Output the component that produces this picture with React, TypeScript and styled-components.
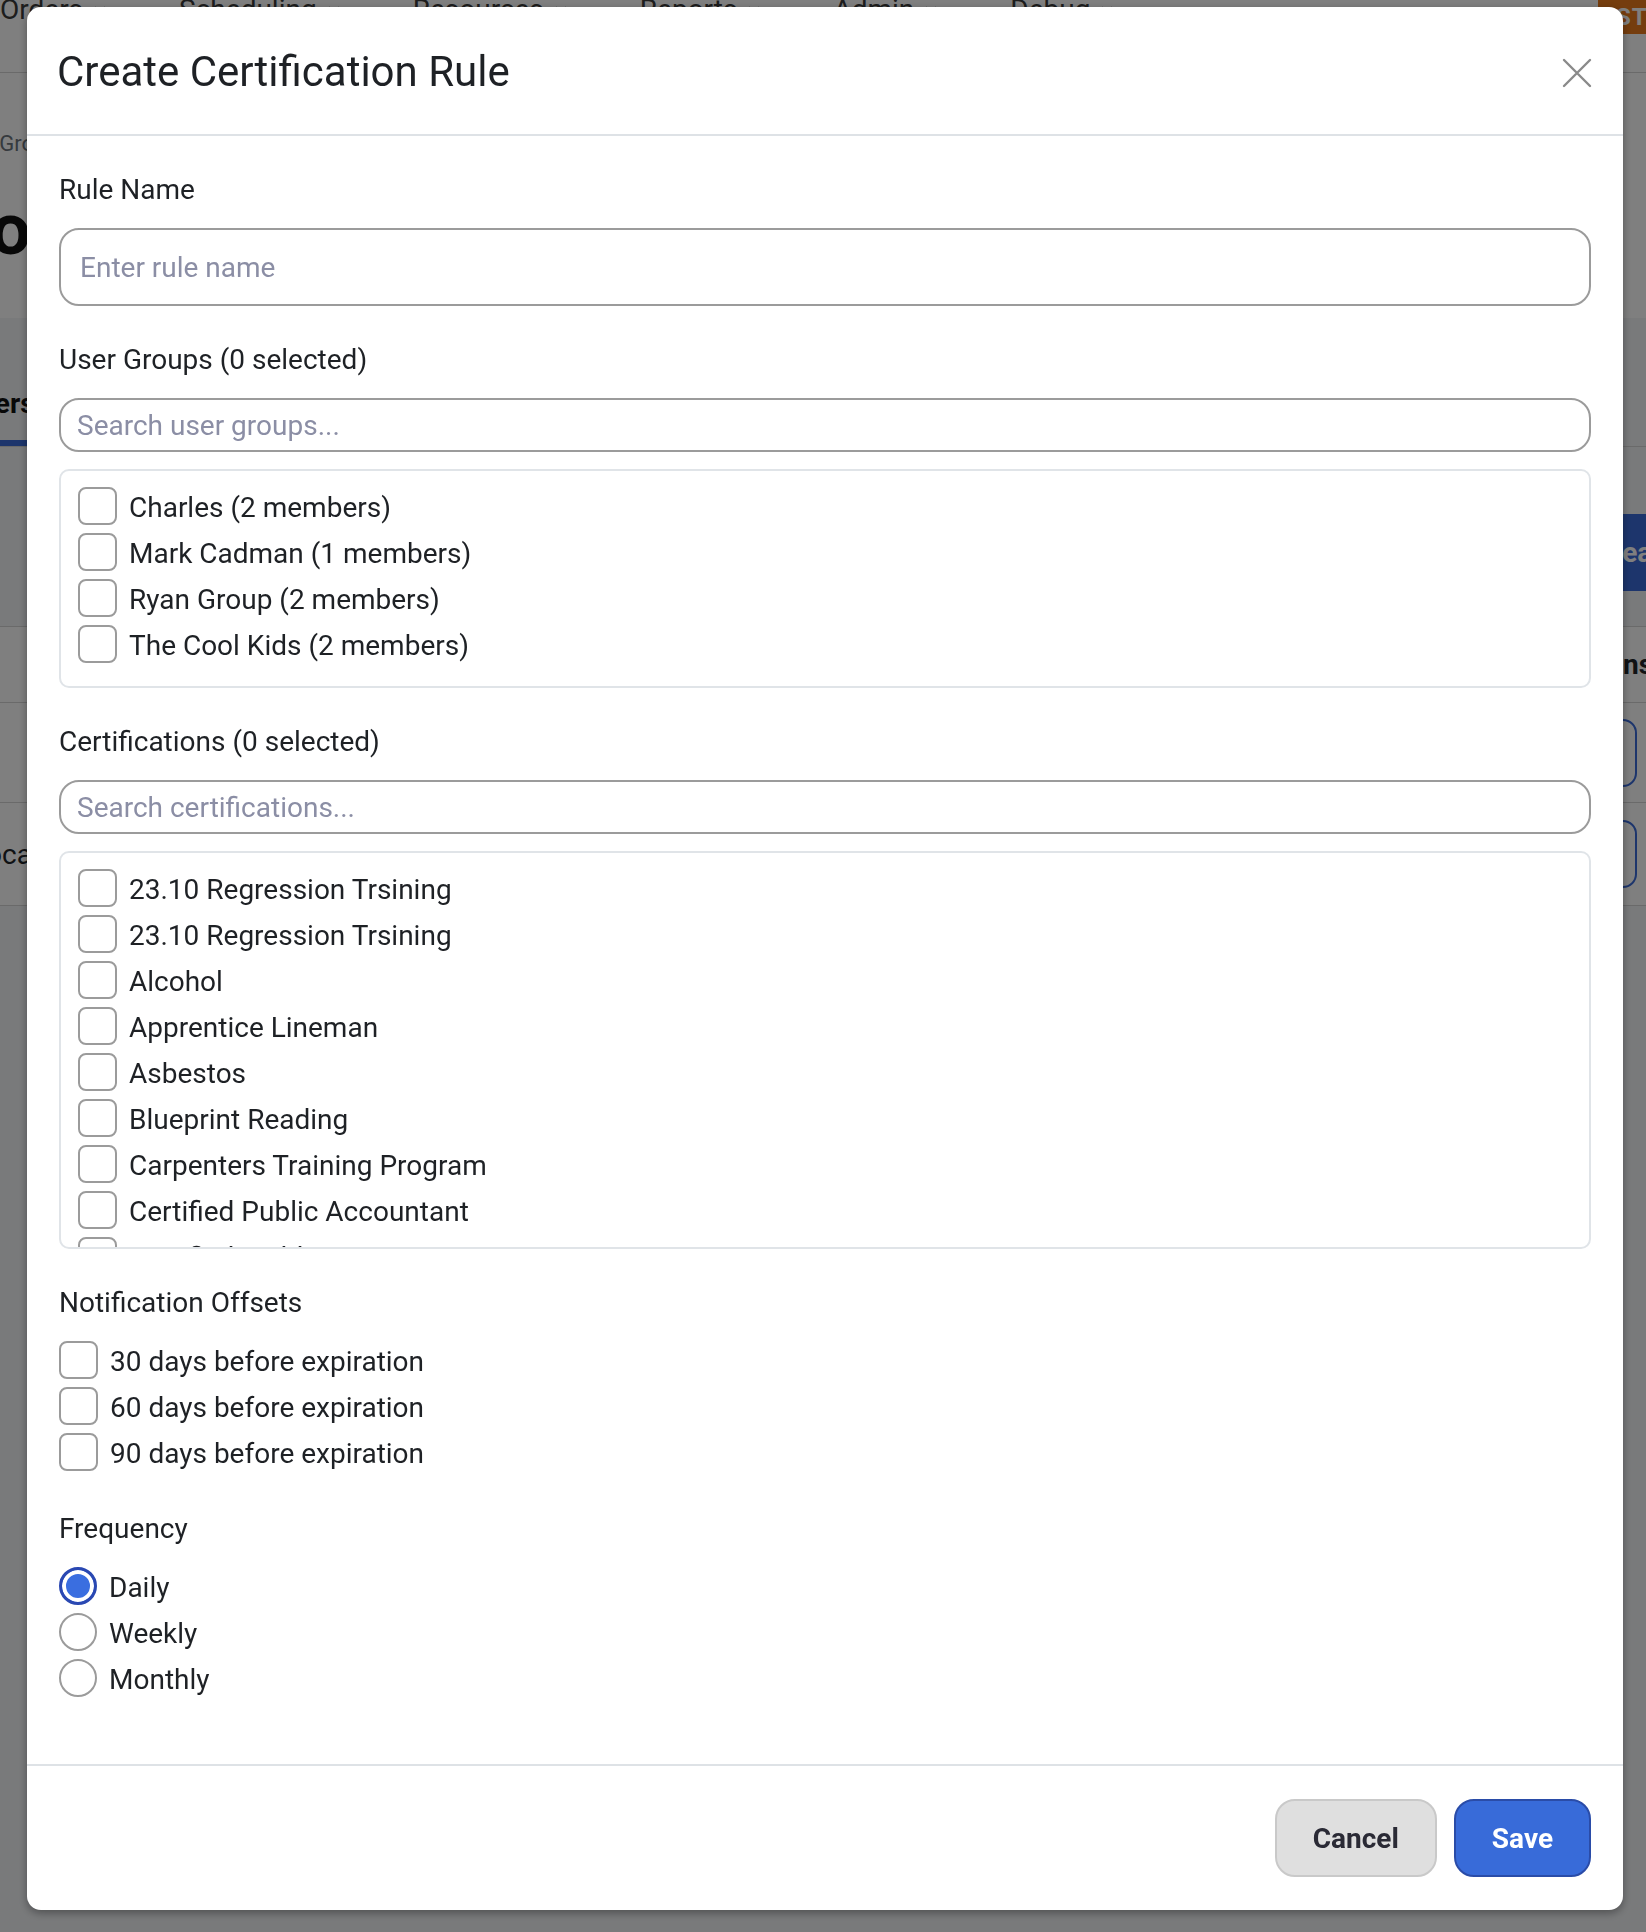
import { useState } from "react";
import styled, { createGlobalStyle } from "styled-components";
import { ChevronDown } from "lucide-react";

const USER_GROUPS = [
  { id: "charles", name: "Charles", members: 2 },
  { id: "mark", name: "Mark Cadman", members: 1 },
  { id: "ryan", name: "Ryan Group", members: 2 },
  { id: "cool", name: "The Cool Kids", members: 2 },
];

const CERTIFICATIONS = [
  "23.10 Regression Trsining",
  "23.10 Regression Trsining",
  "Alcohol",
  "Apprentice Lineman",
  "Asbestos",
  "Blueprint Reading",
  "Carpenters Training Program",
  "Certified Public Accountant",
  "Certified Welding",
  "Confined Space Entry",
  "CPR / First Aid",
  "Crane Operator",
];

const OFFSETS = [30, 60, 90];

const FREQUENCIES = [
  { value: "daily", label: "Daily" },
  { value: "weekly", label: "Weekly" },
  { value: "monthly", label: "Monthly" },
];

const NAV_ITEMS = ["Orders", "Scheduling", "Resources", "Reports", "Admin", "Debug"];

const GlobalStyle = createGlobalStyle`
  * { box-sizing: border-box; }
  html, body {
    margin: 0;
    padding: 0;
  }
  body {
    font-family: Roboto, "Liberation Sans", Arial, sans-serif;
    color: #212529;
    background: #f2f4f7;
    overflow: hidden;
  }
`;

/* ---------- page behind the dialog ---------- */

const Page = styled.div`
  width: 1646px;
  height: 1932px;
  overflow: hidden;
  background: #f2f4f7;
`;

const TopNav = styled.nav`
  position: relative;
  height: 73px;
  display: flex;
  align-items: flex-start;
  gap: 70px;
  background: #fff;
  border-bottom: 1px solid #d4d4d4;
`;

const NavItem = styled.div`
  display: flex;
  align-items: center;
  gap: 8px;
  font-size: 28px;
  line-height: 20px;
  color: #3a3a3a;
`;

const EnvBadge = styled.div`
  position: absolute;
  top: 0;
  right: -96px;
  height: 34px;
  padding: 0 18px;
  background: #ea7a1c;
  color: #fff;
  font-size: 24px;
  font-weight: 700;
  line-height: 34px;
  letter-spacing: 1px;
`;

/* the page is wider than the window and sits scrolled a little to the right */
const Main = styled.main`
  width: 1911px;
  margin-left: -117px;
`;

const PageHeader = styled.header`
  height: 245px;
  padding: 56px 24px 0;
  background: #fff;
`;

const Breadcrumb = styled.div`
  display: flex;
  gap: 12px;
  font-size: 22px;
  line-height: 30px;
  color: #6c757d;
`;

const PageTitle = styled.h1`
  margin: 35px 0 0 9px;
  font-size: 72px;
  line-height: 72px;
  font-weight: 700;
  color: #111;
`;

const TabBar = styled.div`
  height: 129px;
  display: flex;
  align-items: flex-end;
  padding: 0 24px 0 49px;
  border-bottom: 1px solid #d4d4d4;
`;

const Tab = styled.div<{ $active?: boolean }>`
  height: 80px;
  display: flex;
  align-items: center;
  padding: 0 30px;
  font-size: 28px;
  font-weight: 700;
  color: ${(p) => (p.$active ? "#111" : "#6c757d")};
  border-bottom: 6px solid ${(p) => (p.$active ? "#3a6bd9" : "transparent")};
`;

const Toolbar = styled.div`
  height: 179px;
  display: flex;
  justify-content: flex-end;
  align-items: flex-start;
  padding: 67px 26px 0 24px;
`;

const CreateButton = styled.button`
  height: 77px;
  padding: 0 28px;
  border: 0;
  border-radius: 14px;
  background: #3a6bd9;
  color: #fff;
  font: inherit;
  font-size: 28px;
  font-weight: 700;
  white-space: nowrap;
`;

const Table = styled.div`
  background: #fff;
  border-top: 1px solid #d4d4d4;
`;

const TableRow = styled.div<{ $height: number; $head?: boolean }>`
  height: ${(p) => p.$height}px;
  display: grid;
  grid-template-columns: 1fr 1fr 237px;
  align-items: center;
  border-bottom: 1px solid #d4d4d4;
  font-size: 28px;
  font-weight: ${(p) => (p.$head ? 700 : 400)};
  color: #212529;
`;

const Cell = styled.div`
  padding: 0 30px 0 88px;
  white-space: nowrap;
`;

const ActionCell = styled.div`
  display: flex;
  gap: 16px;
  white-space: nowrap;
`;

const OutlineButton = styled.button`
  height: 68px;
  padding: 0 14px;
  border: 2px solid #3a6bd9;
  border-radius: 14px;
  background: #fff;
  color: #3a6bd9;
  font: inherit;
  font-size: 28px;
  font-weight: 700;
`;

/* ---------- dialog ---------- */

const Overlay = styled.div`
  position: fixed;
  inset: 0;
  display: flex;
  align-items: flex-start;
  padding: 7px 0 0 27px;
  background: rgba(0, 0, 0, 0.5);
`;

const Dialog = styled.div`
  width: 1596px;
  display: flex;
  flex-direction: column;
  background: #fff;
  border-radius: 14px;
  box-shadow: 0 3px 8px rgba(0, 0, 0, 0.35);
  overflow: hidden;
`;

const DialogHeader = styled.div`
  height: 129px;
  display: flex;
  align-items: center;
  justify-content: space-between;
  padding: 4px 31px 0 30px;
  border-bottom: 2px solid #dee2e6;
`;

const DialogTitle = styled.h2`
  margin: 0;
  font-size: 42px;
  font-weight: 400;
  line-height: 1.2;
  color: #1e2125;
`;

const CloseButton = styled.button`
  width: 30px;
  height: 30px;
  display: flex;
  padding: 0;
  border: 0;
  background: none;
  color: #8a8a8a;
  cursor: pointer;
`;

const DialogBody = styled.div`
  padding: 33px 32px 30px;
`;

const Field = styled.section`
  display: flex;
  flex-direction: column;
  margin-bottom: 33px;
`;

const FieldLabel = styled.label`
  margin-bottom: 17px;
  font-size: 28px;
  line-height: 42px;
  color: #1e2125;
`;

const TextInput = styled.input<{ $size: "lg" | "sm" }>`
  height: ${(p) => (p.$size === "lg" ? 78 : 54)}px;
  padding: 0 ${(p) => (p.$size === "lg" ? 19 : 16)}px;
  border: 2px solid #9b9b9b;
  border-radius: 20px;
  font: inherit;
  font-size: 28px;
  color: #212529;
  outline: none;

  &::placeholder {
    color: #8b8ea5;
  }
`;

const SearchInput = styled(TextInput)`
  margin-bottom: 17px;
`;

const CheckList = styled.div<{ $maxHeight?: number }>`
  display: flex;
  flex-direction: column;
  gap: 4px;
  padding: 16px 17px 19px;
  border: 2px solid #e0e4e8;
  border-radius: 10px;
  max-height: ${(p) => (p.$maxHeight ? `${p.$maxHeight}px` : "none")};
  overflow-y: auto;
  scrollbar-width: none;

  &::-webkit-scrollbar {
    display: none;
  }
`;

const OptionStack = styled.div`
  display: flex;
  flex-direction: column;
  gap: 4px;
`;

const OptionRow = styled.label`
  display: flex;
  align-items: flex-start;
  gap: 12px;
  height: 42px;
  flex-shrink: 0;
  font-size: 28px;
  line-height: 42px;
  color: #1e2125;
  white-space: nowrap;
  cursor: pointer;
`;

const CheckInput = styled.input`
  appearance: none;
  width: 39px;
  height: 38px;
  margin: 0;
  flex-shrink: 0;
  border: 2px solid #9b9b9b;
  border-radius: 8px;
  background: #fff;
  cursor: pointer;

  &:checked {
    border-color: #2a48b2;
    background: #3a6bd9;
  }
`;

const RadioInput = styled.input`
  appearance: none;
  width: 38px;
  height: 38px;
  margin: 0;
  flex-shrink: 0;
  border: 2px solid #9b9b9b;
  border-radius: 50%;
  background: #fff;
  cursor: pointer;

  &:checked {
    border: 3px solid #2a48b2;
    background: #3a6ee0;
    box-shadow: inset 0 0 0 4px #fff;
  }
`;

const DialogFooter = styled.div`
  height: 146px;
  display: flex;
  align-items: center;
  justify-content: flex-end;
  gap: 17px;
  padding: 0 32px;
  border-top: 2px solid #dee2e6;
`;

const FooterButton = styled.button<{ $variant: "primary" | "secondary" }>`
  height: 78px;
  padding: 0 36px;
  border-radius: 20px;
  font: inherit;
  font-size: 28px;
  font-weight: 700;
  cursor: pointer;
  border: 2px solid ${(p) => (p.$variant === "primary" ? "#2a4ca8" : "#c9c9c9")};
  background: ${(p) => (p.$variant === "primary" ? "#386bd9" : "#dfdfdf")};
  color: ${(p) => (p.$variant === "primary" ? "#fff" : "#2a2a35")};
`;

function toggle<T>(list: T[], value: T) {
  return list.includes(value) ? list.filter((v) => v !== value) : [...list, value];
}

export default function App() {
  const [ruleName, setRuleName] = useState("");
  const [groupQuery, setGroupQuery] = useState("");
  const [certQuery, setCertQuery] = useState("");
  const [groups, setGroups] = useState<string[]>([]);
  const [certs, setCerts] = useState<number[]>([]);
  const [offsets, setOffsets] = useState<number[]>([]);
  const [frequency, setFrequency] = useState("daily");

  const visibleGroups = USER_GROUPS.filter((g) =>
    g.name.toLowerCase().includes(groupQuery.toLowerCase())
  );
  const visibleCerts = CERTIFICATIONS.map((name, index) => ({ name, index })).filter((c) =>
    c.name.toLowerCase().includes(certQuery.toLowerCase())
  );

  return (
    <>
      <GlobalStyle />
      <Page>
        <TopNav>
          {NAV_ITEMS.map((item) => (
            <NavItem key={item}>
              {item}
              <ChevronDown size={18} strokeWidth={2.5} />
            </NavItem>
          ))}
          <EnvBadge>STAGING</EnvBadge>
        </TopNav>
        <Main>
          <PageHeader>
            <Breadcrumb>
              <span>Home</span>
              <span>/</span>
              <span>Groups</span>
            </Breadcrumb>
            <PageTitle>Groups</PageTitle>
          </PageHeader>
          <TabBar>
            <Tab $active>Users</Tab>
            <Tab>Certification Rules</Tab>
          </TabBar>
          <Toolbar>
            <CreateButton>Create Rule</CreateButton>
          </Toolbar>
          <Table>
            <TableRow $height={76} $head>
              <Cell />
              <Cell>Members</Cell>
              <ActionCell>Actions</ActionCell>
            </TableRow>
            <TableRow $height={100}>
              <Cell>IT</Cell>
              <Cell>2</Cell>
              <ActionCell>
                <OutlineButton>Edit</OutlineButton>
                <OutlineButton>Delete</OutlineButton>
              </ActionCell>
            </TableRow>
            <TableRow $height={103}>
              <Cell>Location Leads</Cell>
              <Cell>1</Cell>
              <ActionCell>
                <OutlineButton>Edit</OutlineButton>
                <OutlineButton>Delete</OutlineButton>
              </ActionCell>
            </TableRow>
          </Table>
        </Main>
      </Page>

      <Overlay>
        <Dialog role="dialog" aria-modal="true">
          <DialogHeader>
            <DialogTitle>Create Certification Rule</DialogTitle>
            <CloseButton aria-label="Close">
              <svg width="30" height="30" viewBox="0 0 30 30" fill="none">
                <path
                  d="M2 2 L28 28 M28 2 L2 28"
                  stroke="currentColor"
                  strokeWidth="2.4"
                  strokeLinecap="round"
                />
              </svg>
            </CloseButton>
          </DialogHeader>

          <DialogBody>
            <Field>
              <FieldLabel htmlFor="rule-name">Rule Name</FieldLabel>
              <TextInput
                id="rule-name"
                $size="lg"
                placeholder="Enter rule name"
                value={ruleName}
                onChange={(e) => setRuleName(e.target.value)}
              />
            </Field>

            <Field>
              <FieldLabel>User Groups ({groups.length} selected)</FieldLabel>
              <SearchInput
                $size="sm"
                placeholder="Search user groups..."
                value={groupQuery}
                onChange={(e) => setGroupQuery(e.target.value)}
              />
              <CheckList>
                {visibleGroups.map((g) => (
                  <OptionRow key={g.id}>
                    <CheckInput
                      type="checkbox"
                      checked={groups.includes(g.id)}
                      onChange={() => setGroups(toggle(groups, g.id))}
                    />
                    {g.name} ({g.members} members)
                  </OptionRow>
                ))}
              </CheckList>
            </Field>

            <Field>
              <FieldLabel>Certifications ({certs.length} selected)</FieldLabel>
              <SearchInput
                $size="sm"
                placeholder="Search certifications..."
                value={certQuery}
                onChange={(e) => setCertQuery(e.target.value)}
              />
              <CheckList $maxHeight={398}>
                {visibleCerts.map((c) => (
                  <OptionRow key={c.index}>
                    <CheckInput
                      type="checkbox"
                      checked={certs.includes(c.index)}
                      onChange={() => setCerts(toggle(certs, c.index))}
                    />
                    {c.name}
                  </OptionRow>
                ))}
              </CheckList>
            </Field>

            <Field>
              <FieldLabel>Notification Offsets</FieldLabel>
              <OptionStack>
                {OFFSETS.map((days) => (
                  <OptionRow key={days}>
                    <CheckInput
                      type="checkbox"
                      checked={offsets.includes(days)}
                      onChange={() => setOffsets(toggle(offsets, days))}
                    />
                    {days} days before expiration
                  </OptionRow>
                ))}
              </OptionStack>
            </Field>

            <Field>
              <FieldLabel>Frequency</FieldLabel>
              <OptionStack>
                {FREQUENCIES.map((f) => (
                  <OptionRow key={f.value}>
                    <RadioInput
                      type="radio"
                      name="frequency"
                      checked={frequency === f.value}
                      onChange={() => setFrequency(f.value)}
                    />
                    {f.label}
                  </OptionRow>
                ))}
              </OptionStack>
            </Field>
          </DialogBody>

          <DialogFooter>
            <FooterButton $variant="secondary">Cancel</FooterButton>
            <FooterButton $variant="primary">Save</FooterButton>
          </DialogFooter>
        </Dialog>
      </Overlay>
    </>
  );
}
